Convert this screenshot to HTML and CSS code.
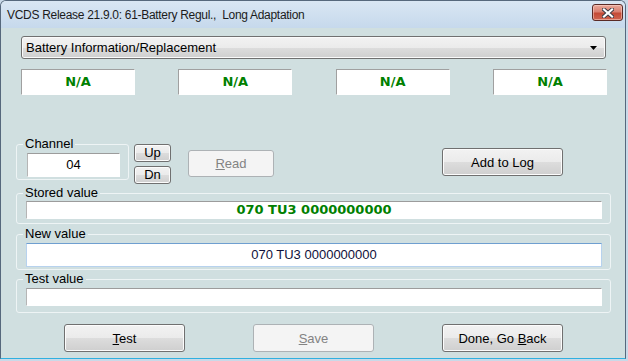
FILE: index.html
```html
<!DOCTYPE html>
<html lang="en">
<head>
    <meta charset="UTF-8">
    <title>VCDS Long Adaptation</title>
    <link rel="stylesheet" href="styles.css">
</head>
<body>
    <div class="window">
        <div class="titlebar">
            <span class="title">VCDS Release 21.9.0: 61-Battery Regul.,&nbsp; Long Adaptation</span>
            <button class="close-btn" aria-label="Close">
                <svg width="12" height="10" viewBox="0 0 12 10">
                    <path d="M2 1.5 L10 8.5 M10 1.5 L2 8.5" stroke="#3b3b45" stroke-width="4" stroke-linecap="square"/>
                    <path d="M2 1.5 L10 8.5 M10 1.5 L2 8.5" stroke="#ffffff" stroke-width="2.2" stroke-linecap="square"/>
                </svg>
            </button>
        </div>

        <div class="client">
            <div class="combo">
                <span>Battery Information/Replacement</span>
                <svg class="combo-arrow" width="7" height="4" viewBox="0 0 7 4"><polygon points="0,0 7,0 3.5,4" fill="#000"/></svg>
            </div>

            <div class="readouts">
                <div class="readout">N/A</div>
                <div class="readout">N/A</div>
                <div class="readout">N/A</div>
                <div class="readout">N/A</div>
            </div>

            <div class="controls">
                <fieldset class="group channel-group">
                    <legend>Channel</legend>
                    <div class="field channel-field">04</div>
                </fieldset>
                <div class="updown">
                    <button class="btn small-btn">Up</button>
                    <button class="btn small-btn">Dn</button>
                </div>
                <button class="btn read-btn" disabled><u>R</u>ead</button>
                <button class="btn log-btn">Add to Log</button>
            </div>

            <fieldset class="group value-group stored-group">
                <legend>Stored value</legend>
                <div class="field value-field stored-field">070 TU3 0000000000</div>
            </fieldset>

            <fieldset class="group value-group new-group">
                <legend>New value</legend>
                <div class="field value-field new-field">070 TU3 0000000000</div>
            </fieldset>

            <fieldset class="group value-group test-group">
                <legend>Test value</legend>
                <div class="field value-field test-field"></div>
            </fieldset>

            <div class="actions">
                <button class="btn action-btn"><u>T</u>est</button>
                <button class="btn action-btn" disabled><u>S</u>ave</button>
                <button class="btn action-btn">Done, Go <u>B</u>ack</button>
            </div>
        </div>
    </div>
</body>
</html>
```

FILE: styles.css
```css
* {
    box-sizing: border-box;
}

body {
    margin: 0;
    background-color: #c9d9e8;
    font-family: 'Liberation Sans', Arial, sans-serif;
    font-size: 13px;
    color: #000;
}

.window {
    width: 626px;
    height: 359px;
    border: 1px solid #56687c;
    border-bottom: 1px solid #2fb0e0;
    border-radius: 6px 6px 0 0;
    background-color: #d0dfe0;
    overflow: hidden;
}

.titlebar {
    display: flex;
    height: 27px;
    background: linear-gradient(#d9e6f3, #c6d9ec);
}

.title {
    font-family: 'Liberation Sans', Arial, sans-serif;
    font-size: 12px;
    letter-spacing: -0.3px;
    line-height: 28px;
    padding-left: 6px;
    color: #1b1b1b;
}

.close-btn {
    display: flex;
    align-items: center;
    justify-content: center;
    margin: 3px 2px 0 auto;
    width: 31px;
    height: 17px;
    padding: 0;
    border: 1px solid #5a2a26;
    border-radius: 3px;
    background: linear-gradient(#e9a99b 0%, #d97f70 45%, #c44a36 55%, #cf6450 100%);
    box-shadow: inset 0 0 0 1px rgba(255, 220, 210, 0.5);
}

.client {
    padding: 8px 0 0 15px;
}

/* combo box */
.combo {
    display: flex;
    align-items: center;
    justify-content: space-between;
    margin-left: 5px;
    width: 585px;
    height: 23px;
    padding: 0 8px 0 4px;
    border: 1px solid #707070;
    border-radius: 3px;
    background: linear-gradient(#f2f2f2 0%, #ebebeb 50%, #dddddd 50%, #cfcfcf 100%);
    box-shadow: inset 0 0 0 1px #fafafa;
}

.readouts {
    display: flex;
    justify-content: space-between;
    margin: 10px 0 0 5px;
    width: 586px;
}

.readout {
    width: 114px;
    height: 26px;
    line-height: 24px;
    text-align: center;
    background-color: #fff;
    border: 1px solid #fff;
    border-top-color: #a0a0a0;
    border-left-color: #a0a0a0;
    color: #008000;
    font-family: 'DejaVu Sans', sans-serif;
    font-weight: bold;
    font-size: 13px;
}

/* buttons */
.btn {
    padding: 0;
    border: 1px solid #707070;
    border-radius: 3px;
    background: linear-gradient(#f2f2f2 0%, #ebebeb 50%, #dddddd 50%, #cfcfcf 100%);
    box-shadow: inset 0 0 0 1px #fcfcfc;
    font-family: 'Liberation Sans', Arial, sans-serif;
    font-size: 13px;
    color: #000;
}

.btn:disabled {
    border-color: #adb2b5;
    background: #f4f4f4;
    box-shadow: none;
    color: #838383;
}

.controls {
    display: flex;
    align-items: flex-start;
    height: 49px;
    margin-top: 42px;
}

.updown {
    display: flex;
    flex-direction: column;
    gap: 4px;
    margin: 7px 0 0 5px;
}

.small-btn {
    width: 37px;
    height: 18px;
    line-height: 14px;
}

.read-btn {
    width: 86px;
    height: 27px;
    margin: 13px 0 0 17px;
}

.log-btn {
    width: 121px;
    height: 28px;
    margin: 11px 0 0 168px;
}

/* group boxes */
.group {
    margin: 0;
    padding: 0;
    border: 1px solid #eef4f5;
    border-radius: 3px;
    min-width: 0;
}

.group legend {
    margin-left: -3px;
    padding: 0 2px;
    line-height: 14px;
}

.channel-group {
    width: 113px;
    padding: 2px 8px 2px 10px;
}

.channel-group legend {
    margin-left: -4px;
}

.field {
    background-color: #fff;
    border: 1px solid #fff;
    border-top-color: #9c9c9c;
    border-left-color: #b5b5b5;
    text-align: center;
}

.channel-field {
    width: 93px;
    height: 24px;
    line-height: 22px;
}

.value-group {
    width: 595px;
    padding: 0 8px 4px 9px;
}

.value-field {
    width: 576px;
    height: 18px;
    line-height: 16px;
}

.stored-group {
    padding-top: 1px;
}

.stored-field {
    color: #008000;
    font-family: 'DejaVu Sans', sans-serif;
    font-weight: bold;
    font-size: 13px;
}

.new-group {
    margin-top: 3px;
    padding-top: 2px;
    padding-bottom: 2px;
}

.new-field {
    height: 24px;
    line-height: 22px;
    border-color: #b7d2ee;
    border-top-color: #6f9fd0;
    color: #10103a;
}

.test-group {
    margin-top: 2px;
    padding-top: 2px;
    padding-bottom: 6px;
}

.actions {
    display: flex;
    gap: 68px;
    margin-top: 11px;
    padding-left: 48px;
}

.action-btn {
    width: 121px;
    height: 28px;
}
```
